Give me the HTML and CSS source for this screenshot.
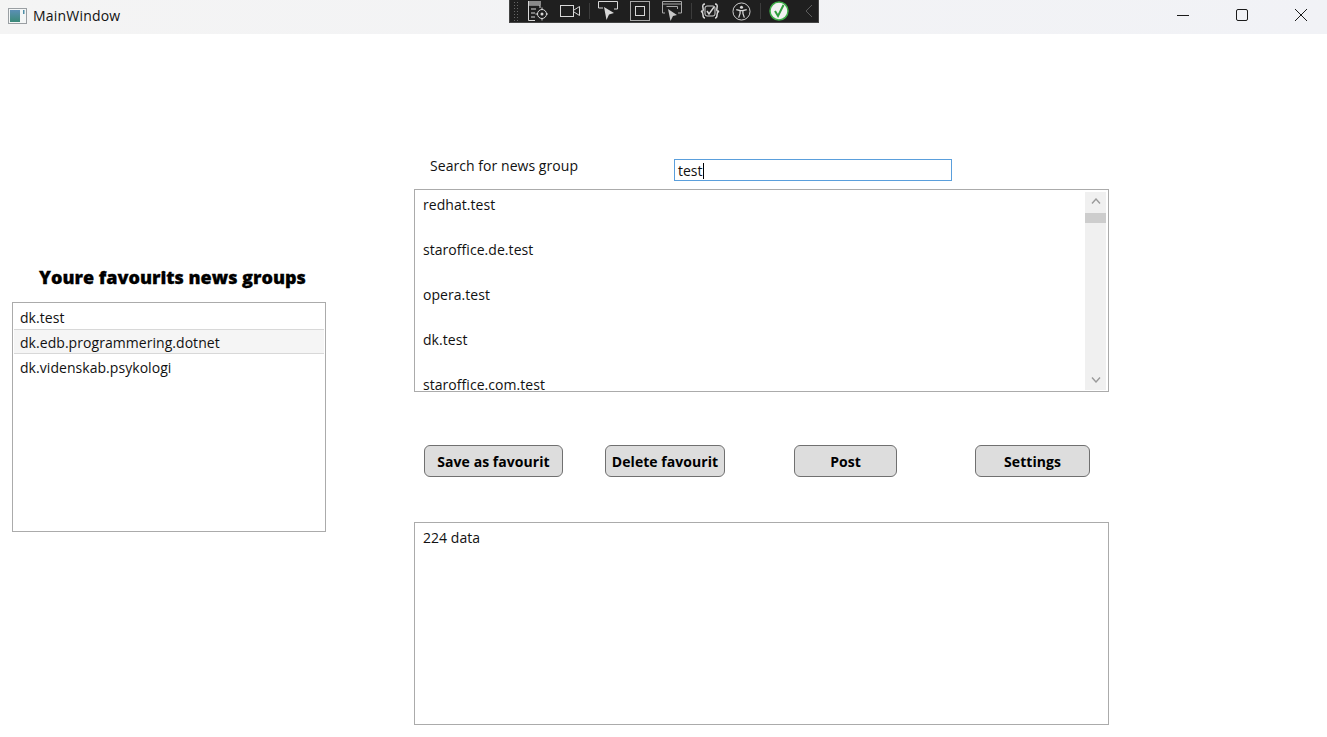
FILE: index.html
```html
<!DOCTYPE html>
<html lang="en">
<head>
  <meta charset="UTF-8" />
  <meta name="viewport" content="width=device-width, initial-scale=1.0" />
  <title>MainWindow</title>
  <link rel="stylesheet" href="styles.css">
</head>
<body>
  <!-- TITLE BAR -->
  <header class="titlebar">
    <svg class="app-icon" width="19" height="16" viewBox="0 0 19 16">
      <defs>
        <linearGradient id="appFill" x1="0" y1="0" x2="0" y2="1">
          <stop offset="0" stop-color="#5b8fb5"/>
          <stop offset="1" stop-color="#3b8a78"/>
        </linearGradient>
      </defs>
      <rect x="0.5" y="0.5" width="18" height="15" fill="#f4f6f6" stroke="#9a9fa3"/>
      <rect x="2" y="2" width="10" height="12" fill="url(#appFill)"/>
      <rect x="15" y="2" width="1.5" height="4" fill="#4f8fa8"/>
    </svg>
    <span class="app-title">MainWindow</span>
    <div class="window-buttons">
      <svg width="12" height="12" viewBox="0 0 12 12"><path d="M0 6.5H12" stroke="#1a1a1a" fill="none"/></svg>
      <svg width="12" height="12" viewBox="0 0 12 12"><rect x="0.5" y="0.5" width="11" height="11" rx="1.5" stroke="#1a1a1a" fill="none"/></svg>
      <svg width="12" height="12" viewBox="0 0 12 12"><path d="M0 0L12 12M12 0L0 12" stroke="#1a1a1a" fill="none"/></svg>
    </div>
  </header>

  <!-- DEBUG TOOLBAR -->
  <div class="debug-bar">
    <span class="grip"></span>
    <svg class="tool" width="20" height="20" viewBox="0 0 20 20"><path d="M.5 0V19.5H7M.5 4H12V7" stroke="#d8d8d8" fill="none"/><rect x="1" y="0" width="12" height="4" fill="#8a8a8a"/><path d="M3 8H8M3 12H7M3 16H7" stroke="#d8d8d8" fill="none"/><circle cx="14" cy="13" r="4.5" stroke="#d8d8d8" fill="none"/><circle cx="14" cy="13" r="1.5" fill="#d8d8d8"/><path d="M14 6.5V9M14 17V19.5M7.5 13H10M18 13H20" stroke="#d8d8d8" fill="none"/></svg>
    <svg class="tool" width="20" height="14" viewBox="0 0 20 14"><rect x="0.5" y="1.5" width="13" height="11" stroke="#d8d8d8" fill="none"/><path d="M14 6L19.5 2.5V11.5L14 8" stroke="#d8d8d8" fill="none"/></svg>
    <span class="sep"></span>
    <svg class="tool" width="20" height="20" viewBox="0 0 20 20"><path d="M.5 7V.5H19.5V8H16M.5 7H5" stroke="#d8d8d8" fill="none"/><path d="M6 6L16 12L11 13.5L8.5 19Z" fill="#d8d8d8"/></svg>
    <svg class="tool" width="20" height="20" viewBox="0 0 20 20"><rect x="0.5" y="0.5" width="19" height="19" stroke="#a8a8a8" fill="none"/><rect x="5.5" y="5.5" width="9" height="9" stroke="#d8d8d8" fill="none"/></svg>
    <svg class="tool" width="20" height="20" viewBox="0 0 20 20"><path d="M.5 .5H19.5V3H.5ZM.5 3V12H3M19.5 3V12H16M4.5 5.5H15.5V8" stroke="#a8a8a8" fill="none"/><path d="M6 8L15 14L11 15L8.5 20Z" fill="#c8c8c8"/></svg>
    <span class="sep"></span>
    <svg class="tool" width="20" height="18" viewBox="0 0 20 18"><path d="M5 2Q2 2 3 6T1 9Q3 10 3 13T5 16M15 2Q18 2 17 6T19 9Q17 10 17 13T15 16" stroke="#d8d8d8" stroke-width="1.5" fill="none"/><rect x="5" y="4" width="10" height="10" rx="2" stroke="#d8d8d8" fill="none"/><path d="M7 9L9 12L14 5" stroke="#d8d8d8" stroke-width="1.5" fill="none"/></svg>
    <svg class="tool" width="19" height="19" viewBox="0 0 20 20"><circle cx="10" cy="10" r="9" stroke="#d8d8d8" fill="none"/><circle cx="10" cy="5.5" r="1.6" fill="#d8d8d8"/><path d="M4.5 8L8.5 9V12L7 16.5M15.5 8L11.5 9V12L13 16.5M8.5 9H11.5" stroke="#d8d8d8" stroke-width="1.3" fill="none"/></svg>
    <span class="sep"></span>
    <svg class="tool" width="20" height="20" viewBox="0 0 20 20"><circle cx="10" cy="10" r="9" fill="#f2f2f2" stroke="#3fae49" stroke-width="1.5"/><path d="M6 10L9 15L14.5 4" stroke="#2f9e3e" stroke-width="2" fill="none"/></svg>
    <svg class="tool tool-last" width="8" height="14" viewBox="0 0 8 14"><path d="M7 1L1 7L7 13" stroke="#5c5c5c" fill="none"/></svg>
  </div>

  <main class="window">
    <!-- FAVOURITES -->
    <section class="favourites">
      <h2>Youre favourits news groups</h2>
      <ul class="box fav-list">
        <li>dk.test</li>
        <li class="hover">dk.edb.programmering.dotnet</li>
        <li>dk.videnskab.psykologi</li>
      </ul>
    </section>

    <!-- SEARCH -->
    <section class="search">
      <div class="search-row">
        <span class="search-label">Search for news group</span>
        <div class="search-input">test<span class="caret"></span></div>
      </div>

      <div class="box results">
        <ul class="result-list">
          <li>redhat.test</li>
          <li>staroffice.de.test</li>
          <li>opera.test</li>
          <li>dk.test</li>
          <li>staroffice.com.test</li>
        </ul>
        <div class="scrollbar">
          <svg width="10" height="6" viewBox="0 0 10 6"><path d="M1 5.5L5 1L9 5.5" stroke="#9a9a9a" stroke-width="1.4" fill="none"/></svg>
          <span class="thumb"></span>
          <span class="track"></span>
          <svg width="10" height="6" viewBox="0 0 10 6"><path d="M1 .5L5 5L9 .5" stroke="#9a9a9a" stroke-width="1.4" fill="none"/></svg>
        </div>
      </div>

      <div class="actions">
        <button class="btn btn-save">Save as favourit</button>
        <button class="btn btn-delete">Delete favourit</button>
        <button class="btn btn-post">Post</button>
        <button class="btn btn-settings">Settings</button>
      </div>

      <div class="box output">224 data</div>
    </section>
  </main>
</body>
</html>
```

FILE: styles.css
```css
* { box-sizing: border-box; }
html, body { margin: 0; height: 100%; }
body { font-family: "Open Sans", "Noto Sans", sans-serif; font-size: 14px; color: #111; background: #fff; overflow: hidden; position: relative; letter-spacing: 0.05px; }
ul { list-style: none; margin: 0; padding: 0; }

.titlebar { height: 34px; background: linear-gradient(90deg, #f4f4f4, #f1f2f6); display: flex; align-items: center; padding-left: 8px; }
.app-icon { margin-right: 6px; margin-top: -3px; }
.app-title { font-size: 14px; margin-top: -3px; letter-spacing: 0.2px; }
.window-buttons { margin-left: auto; display: flex; gap: 47px; padding-right: 20px; margin-top: -4px; }

.debug-bar { position: absolute; left: 509px; top: 0; width: 310px; height: 23px; background: #1f1f1f; border: 1px solid #444; border-top: 0; display: flex; align-items: center; padding-left: 3px; }
.grip { width: 6px; height: 20px; background-image: radial-gradient(#666 35%, transparent 40%); background-size: 3px 3px; }
.sep { width: 1px; height: 16px; background: #3c3c3c; margin-left: 9px; }
.tool { flex: none; margin-left: 12px; }
.grip + .tool { margin-left: 9px; }
.sep + .tool { margin-left: 8px; }
.tool-last { margin-left: 16px; }

.window { display: flex; height: 703px; }
.box { border: 1px solid #ababab; background: #fff; }

.favourites { width: 314px; margin-left: 12px; padding-top: 231px; }
.favourites h2 { margin: 0 0 13px 7px; font-size: 18px; font-weight: 800; line-height: 24px; text-align: center; color: #000; letter-spacing: 0; -webkit-text-stroke: 0.3px #000; }
.fav-list { height: 230px; padding: 1px; }
.fav-list li { height: 25px; line-height: 28px; padding: 0 6px; }
.fav-list li.hover { background: #f5f5f5; border: 1px solid #d8d8d8; border-width: 1px 0; line-height: 26px; }

.search { width: 695px; margin-left: 88px; padding-top: 125px; }
.search-row { display: flex; height: 22px; }
.search-label { margin-left: 16px; width: 244px; line-height: 14px; }
.search-input { width: 278px; height: 22px; border: 1px solid #5a9fdc; padding-left: 3px; line-height: 21px; letter-spacing: 0; }
.caret { display: inline-block; width: 1px; height: 16px; background: #000; vertical-align: -3px; }

.results { height: 203px; margin-top: 8px; display: flex; overflow: hidden; }
.result-list { flex: 1; padding: 4px 8px; overflow: hidden; }
.result-list li { height: 45px; line-height: 22px; }
.scrollbar { width: 21px; margin: 2px 2px 1px 0; background: #f0f0f0; display: flex; flex-direction: column; align-items: center; padding: 6px 0 7px; }
.thumb { width: 100%; height: 10px; background: #cdcdcd; margin-top: 9px; }
.track { flex: 1; }

.actions { display: flex; padding-top: 53px; height: 130px; align-items: flex-start; }
.btn { height: 32px; border: 1px solid #707070; border-radius: 6px; background: #dddddd; font: 700 14px "Open Sans", sans-serif; color: #000; padding: 0; letter-spacing: 0.05px; }
.btn-save { width: 139px; margin-left: 10px; }
.btn-delete { width: 120px; margin-left: 42px; }
.btn-post { width: 103px; margin-left: 69px; }
.btn-settings { width: 115px; margin-left: 78px; }

.output { height: 203px; padding: 4px 8px; line-height: 22px; }
```
